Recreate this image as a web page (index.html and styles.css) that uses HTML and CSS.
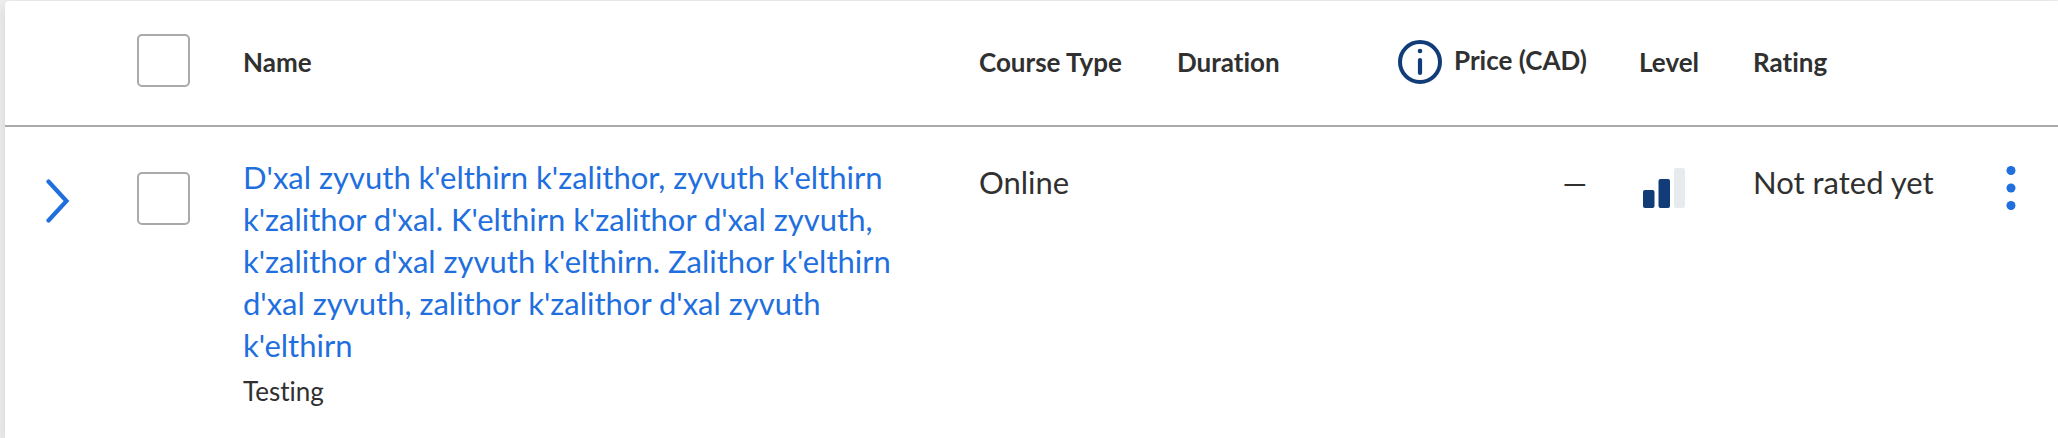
FILE: index.html
```html
<!DOCTYPE html>
<html lang="en">
<head>
<meta charset="utf-8">
<title>Courses</title>
<link rel="stylesheet" href="styles.css">
</head>
<body>
<main class="card">
  <table class="courses">
    <colgroup>
      <col class="col-expand">
      <col class="col-select">
      <col class="col-name">
      <col class="col-type">
      <col class="col-duration">
      <col class="col-price">
      <col class="col-level">
      <col class="col-rating">
      <col class="col-actions">
    </colgroup>
    <thead>
      <tr>
        <td></td>
        <td><input class="check" type="checkbox" aria-label="Select all courses"></td>
        <th scope="col">Name</th>
        <th scope="col">Course Type</th>
        <th scope="col">Duration</th>
        <th scope="col">
          <div class="price-head">
            <button class="icon-button" type="button" aria-label="About prices">
              <svg class="info" viewBox="0 0 44 44" aria-hidden="true">
                <circle cx="22" cy="22" r="20" fill="none" stroke="#113c78" stroke-width="4"/>
                <circle cx="22" cy="11" r="2.3" fill="#113c78"/>
                <path d="M22 20v13" fill="none" stroke="#113c78" stroke-width="4.2" stroke-linecap="round"/>
              </svg>
            </button>
            <span class="price-label">Price (CAD)</span>
          </div>
        </th>
        <th scope="col">Level</th>
        <th scope="col">Rating</th>
        <td></td>
      </tr>
    </thead>
    <tbody>
      <tr>
        <td class="expand-cell">
          <button class="icon-button" type="button" aria-label="Expand row">
            <svg class="chevron" viewBox="0 0 24 44" aria-hidden="true">
              <path d="M2.5 2.5 20.5 22 2.5 41.5" fill="none" stroke="#1f6fde" stroke-width="4.2" stroke-linecap="round" stroke-linejoin="miter"/>
            </svg>
          </button>
        </td>
        <td class="select-cell"><input class="check" type="checkbox" aria-label="Select course"></td>
        <td class="name-cell">
          <a class="course-link" href="#">D'xal zyvuth k'elthirn k'zalithor, zyvuth k'elthirn k'zalithor d'xal. K'elthirn k'zalithor d'xal zyvuth, k'zalithor d'xal zyvuth k'elthirn. Zalithor k'elthirn d'xal zyvuth, zalithor k'zalithor d'xal zyvuth k'elthirn</a>
          <p class="provider">Testing</p>
        </td>
        <td>Online</td>
        <td></td>
        <td class="price">—</td>
        <td class="level-cell">
          <svg class="level" viewBox="0 0 42 40" role="img" aria-label="Intermediate">
            <rect x="0" y="22" width="11.5" height="18" rx="2" fill="#113c78"/>
            <rect x="15.5" y="11" width="11.5" height="29" rx="2" fill="#113c78"/>
            <rect x="31" y="0" width="11" height="40" rx="2" fill="#e7ebee"/>
          </svg>
        </td>
        <td>Not rated yet</td>
        <td class="actions-cell">
          <button class="icon-button" type="button" aria-label="More actions">
            <svg class="dots" viewBox="0 0 10 44" aria-hidden="true">
              <g fill="#1f6fde"><circle cx="5" cy="4.5" r="4.5"/><circle cx="5" cy="22" r="4.5"/><circle cx="5" cy="39.5" r="4.5"/></g>
            </svg>
          </button>
        </td>
      </tr>
    </tbody>
  </table>
</main>
</body>
</html>
```

FILE: styles.css
```css
* {
  box-sizing: border-box;
}

body {
  margin: 0;
  padding: 1px 0 0 5px;
  background: #efefef;
  color: #303030;
  font-family: Lato, "Open Sans", sans-serif;
  font-size: 31px;
  font-variant-ligatures: none;
  line-height: 42px;
}

.card {
  min-height: calc(100vh - 1px);
  background: #fff;
  border-radius: 4px 0 0 0;
  box-shadow: 0 4px 16px rgba(0, 0, 0, 0.12);
}

.courses {
  width: 100%;
  table-layout: fixed;
  border-collapse: separate;
  border-spacing: 0;
}

.col-expand { width: 106px; }
.col-select { width: 106px; }
.col-type { width: 198px; }
.col-duration { width: 172px; }
.col-price { width: 290px; }
.col-level { width: 114px; }
.col-rating { width: 232px; }
.col-actions { width: 99px; }

.courses th,
.courses td {
  padding: 0 26px;
  text-align: left;
  vertical-align: top;
  white-space: nowrap;
}

.courses thead th,
.courses thead td {
  height: 126px;
  border-bottom: 2px solid #aaa;
  font-size: 26px;
  line-height: 32px;
  vertical-align: middle;
}

.courses thead th {
  padding-bottom: 2px;
}

.courses thead td {
  padding-bottom: 6px;
}

.courses tbody td {
  padding-top: 34px;
  padding-bottom: 28px;
}

.check {
  display: block;
  width: 53px;
  height: 53px;
  margin: 0;
  appearance: none;
  background: #fff;
  border: 2px solid #aaa;
  border-radius: 5px;
}

.icon-button {
  display: block;
  padding: 0;
  border: 0;
  background: none;
  cursor: pointer;
}

.icon-button svg,
.level {
  display: block;
}

.price-head {
  display: flex;
  align-items: center;
  justify-content: flex-end;
  gap: 12px;
}

.price-label {
  padding-bottom: 4px;
}

.info {
  width: 44px;
  height: 44px;
}

.chevron {
  width: 24px;
  height: 44px;
}

.dots {
  width: 10px;
  height: 44px;
}

.level {
  width: 42px;
  height: 40px;
  margin-left: 4px;
}

.courses tbody .expand-cell {
  padding-top: 52px;
  padding-left: 41px;
}

.courses tbody .select-cell {
  padding-top: 45px;
}

.courses tbody .name-cell {
  padding-top: 29px;
  white-space: normal;
}

.courses tbody .level-cell {
  padding-top: 41px;
}

.courses tbody .actions-cell {
  padding-top: 39px;
  padding-left: 47px;
}

.courses tbody .price {
  text-align: right;
}

.course-link {
  display: block;
  color: #1f6fde;
  text-decoration: none;
}

.provider {
  margin: 9px 0 0;
  font-size: 26px;
  line-height: 32px;
}
```
